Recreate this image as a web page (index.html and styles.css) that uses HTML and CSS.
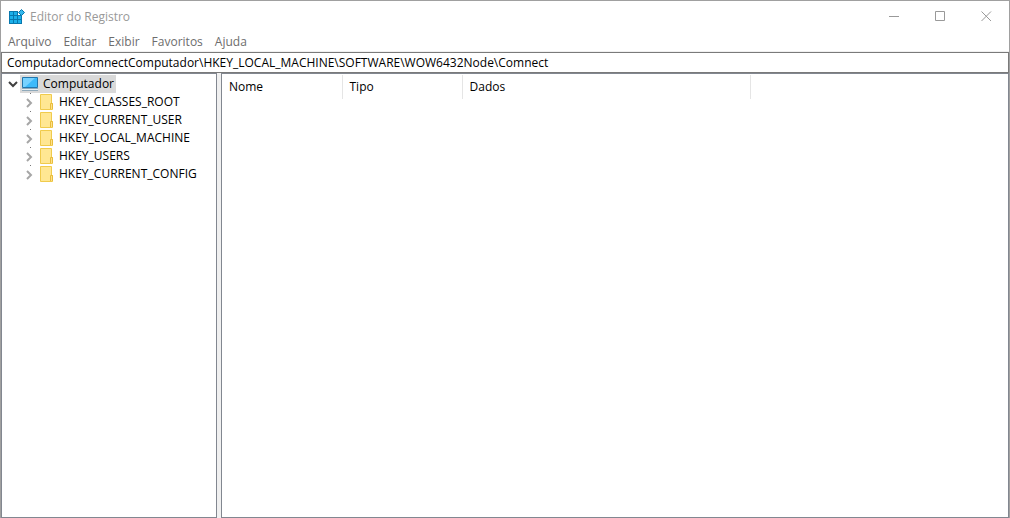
FILE: index.html
```
<!DOCTYPE html>
<html lang="pt-BR">
<head>
<meta charset="utf-8">
<title>Editor do Registro</title>
<link rel="stylesheet" href="styles.css">
</head>
<body>
<svg class="defs" width="0" height="0" aria-hidden="true">
  <symbol id="folder" viewBox="0 0 16 16">
    <path d="M1.500.5h11v9h1v6h-12z" fill="#ffe793" stroke="#f0cb4c"/>
    <path d="M11.500 15V9.500h2V15" fill="#ffe08a" stroke="#e8bd3c"/>
  </symbol>
  <symbol id="closed" viewBox="0 0 10 10">
    <path d="M3 1l4 4-4 4" fill="none" stroke="#a6a6a6" stroke-width="2"/>
  </symbol>
</svg>
<div class="window">
  <header class="titlebar">
    <svg class="app-icon" width="16" height="16" viewBox="0 0 16 16" aria-hidden="true">
      <path d="M0 2h9v4h4v9H0z" fill="#0878ae"/>
      <path d="M1 3h3v3H1zM5 3h3v3H5zM1 7h3v3H1zM5 7h3v3H5zM9 7h3v3H9zM1 11h3v3H1zM5 11h3v3H5zM9 11h3v3H9z" fill="#1cb0ea"/>
      <path d="M12.500.5L15.500 3.500l-3 3-3-3z" fill="#35b8ec" stroke="#0878ae"/>
    </svg>
    <h1 class="title">Editor do Registro</h1>
    <div class="controls">
      <button class="control" aria-label="Minimizar"><svg width="11" height="11" viewBox="0 0 11 11"><path d="M0 5.500h10"/></svg></button>
      <button class="control" aria-label="Maximizar"><svg width="11" height="11" viewBox="0 0 11 11"><path d="M.5.5h9v9h-9z"/></svg></button>
      <button class="control" aria-label="Fechar"><svg width="11" height="11" viewBox="0 0 11 11"><path d="M.5.5l9.500 9.500M10 .5l-9.500 9.500"/></svg></button>
    </div>
  </header>
  <nav class="menubar" aria-label="Menu">
    <button>Arquivo</button>
    <button>Editar</button>
    <button>Exibir</button>
    <button>Favoritos</button>
    <button>Ajuda</button>
  </nav>
  <input class="address" type="text" aria-label="Endereço" spellcheck="false" value="ComputadorComnectComputador\HKEY_LOCAL_MACHINE\SOFTWARE\WOW6432Node\Comnect">
  <main class="panes">
    <section class="pane tree" aria-label="Chaves">
      <div class="root">
        <svg width="10" height="10" viewBox="0 0 10 10" aria-hidden="true"><path d="M1 3l4 4 4-4" fill="none" stroke="#404040" stroke-width="2"/></svg>
        <div class="selected">
          <svg width="16" height="16" viewBox="0 0 16 16" aria-hidden="true">
            <path d="M.5 1.500h15v10H.5z" fill="#3dbafa" stroke="#2376ac"/>
            <path d="M1 2h12L3 11H1z" fill="#78d2ff"/>
            <path d="M0 12.500h16M0 14.500h16" stroke="#8fa9ba"/>
            <path d="M0 13.500h16" stroke="#e5eef3"/>
          </svg>
          <span>Computador</span>
        </div>
      </div>
      <ul class="keys">
        <li><svg class="arrow"><use href="#closed"/></svg><svg class="folder"><use href="#folder"/></svg><span>HKEY_CLASSES_ROOT</span></li>
        <li><svg class="arrow"><use href="#closed"/></svg><svg class="folder"><use href="#folder"/></svg><span>HKEY_CURRENT_USER</span></li>
        <li><svg class="arrow"><use href="#closed"/></svg><svg class="folder"><use href="#folder"/></svg><span>HKEY_LOCAL_MACHINE</span></li>
        <li><svg class="arrow"><use href="#closed"/></svg><svg class="folder"><use href="#folder"/></svg><span>HKEY_USERS</span></li>
        <li><svg class="arrow"><use href="#closed"/></svg><svg class="folder"><use href="#folder"/></svg><span>HKEY_CURRENT_CONFIG</span></li>
      </ul>
    </section>
    <section class="pane values" aria-label="Valores">
      <table>
        <thead>
          <tr><th class="name">Nome</th><th class="type">Tipo</th><th class="data">Dados</th></tr>
        </thead>
      </table>
    </section>
  </main>
</div>
</body>
</html>
```
FILE: styles.css
```
* { box-sizing: border-box; }

body {
  margin: 0;
  font: 12px/18px "Segoe UI", "Open Sans", "Noto Sans", sans-serif;
  color: #000;
  background: #e4e4e4;
}

button, input { font: inherit; }

.defs { display: block; }

.window {
  display: flex;
  flex-direction: column;
  height: 100vh;
  border: 1px solid #a0a0a0;
  border-bottom: 0;
  background: #f0f0f0;
}

.titlebar {
  display: flex;
  align-items: center;
  height: 31px;
  padding-left: 8px;
  background: #fff;
}

.title {
  flex: 1;
  margin: 0 0 0 5px;
  font-size: 12px;
  font-weight: 400;
  color: #999;
}

.controls { display: flex; }

.control {
  width: 46px;
  height: 30px;
  padding: 0;
  border: 0;
  background: none;
}

.control svg {
  display: block;
  margin: 0 auto;
  fill: none;
  stroke: #999;
}

.menubar {
  display: flex;
  height: 20px;
  padding-left: 1px;
  border-bottom: 1px solid #f0f0f0;
  background: #fff;
}

.menubar button {
  padding: 0 6px;
  border: 0;
  background: none;
  color: #6d6d6d;
}

.address {
  width: 100%;
  height: 21px;
  padding: 0 5px;
  border: 1px solid #7a7a7a;
  border-radius: 0;
  outline: 0;
  background: #fff;
  color: #000;
}

.panes {
  flex: 1;
  display: grid;
  grid-template-columns: 216px 1fr;
  gap: 4px;
  min-height: 0;
}

.pane {
  border: 1px solid #828790;
  background: #fff;
  overflow: hidden;
}

.tree { padding-top: 1px; }

.root {
  display: flex;
  align-items: center;
  gap: 2px;
  padding-left: 6px;
}

.selected {
  display: flex;
  align-items: center;
  gap: 5px;
  padding: 0 2px;
  background: #d9d9d9;
}

.keys {
  margin: 0;
  padding: 0 0 0 22px;
  list-style: none;
}

.keys li {
  display: flex;
  align-items: center;
  height: 18px;
  background: radial-gradient(#777, #777) 6px 0 / 1px 1px no-repeat;
}

.arrow {
  width: 10px;
  height: 10px;
  margin: 2px 5px 0 0;
}

.folder {
  width: 16px;
  height: 16px;
  margin-right: 4px;
}

table {
  border-collapse: collapse;
  table-layout: fixed;
  width: 529px;
  margin-top: 1px;
}

th {
  height: 24px;
  padding: 0 7px;
  border-right: 1px solid #e5e5e5;
  font-weight: 400;
  text-align: left;
}

.name { width: 120px; }
.type { width: 120px; }
```
